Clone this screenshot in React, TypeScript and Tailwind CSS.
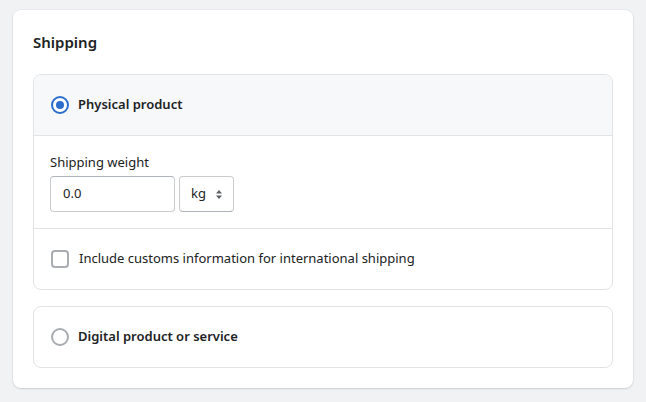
export default function App() {
  return (
    <div
      className="min-h-[402px] w-full bg-[#f1f2f4] pl-[13px] pr-[13px] pt-[10px] pb-[14px] text-[#202223]"
      style={{ fontFamily: '"Noto Sans", "Open Sans", sans-serif' }}
    >
      <div className="w-[620px] rounded-lg bg-white px-5 pt-5 pb-5 shadow-[0_1px_2px_rgba(0,0,0,0.12),0_0_0_1px_rgba(63,63,68,0.04)]">
        <h2 className="h-6 text-[15px] font-semibold leading-6">Shipping</h2>

        <div className="mt-5 flex flex-col gap-4">
          <div className="overflow-hidden rounded-lg border border-[#e1e3e5]">
            <label className="flex h-[60px] items-center gap-[9px] bg-[#f6f8fa] px-[17px]">
              <span className="flex h-[18px] w-[18px] items-center justify-center rounded-full border-2 border-[#2c6ecb] bg-white">
                <span className="h-2 w-2 rounded-full bg-[#2c6ecb]" />
              </span>
              <span className="text-[13px] font-semibold">Physical product</span>
            </label>

            <div className="border-t border-[#e1e3e5] px-4 pt-4 pb-4">
              <div className="h-5 text-[13px] leading-5">Shipping weight</div>
              <div className="mt-1 flex gap-1">
                <div className="flex h-9 w-[125px] items-center rounded-[4px] border border-[#c9cccf] border-t-[#aeb4b9] px-3 text-[13px]">
                  0.0
                </div>
                <div className="flex h-9 w-[55px] items-center justify-between rounded-[4px] border border-[#c9cccf] border-b-[#aeb4b9] pl-[11px] pr-[10px] text-[13px]">
                  <span>kg</span>
                  <svg width="8" height="11" viewBox="0 0 8 11" className="text-[#5c5f62]">
                    <path d="M4 1 L7 4.5 H1 Z" fill="currentColor" />
                    <path d="M4 10 L7 6.5 H1 Z" fill="currentColor" />
                  </svg>
                </div>
              </div>
            </div>

            <label className="flex h-[61px] items-center gap-[10px] border-t border-[#e1e3e5] px-[17px]">
              <span className="h-[18px] w-[18px] rounded-[4px] border-2 border-[#a9acb0] bg-white" />
              <span className="text-[13px]">Include customs information for international shipping</span>
            </label>
          </div>

          <label className="flex h-[62px] items-center gap-[9px] rounded-lg border border-[#e1e3e5] px-[17px]">
            <span className="h-[18px] w-[18px] rounded-full border-2 border-[#a9acb0] bg-white" />
            <span className="text-[13px] font-semibold">Digital product or service</span>
          </label>
        </div>
      </div>
    </div>
  );
}
